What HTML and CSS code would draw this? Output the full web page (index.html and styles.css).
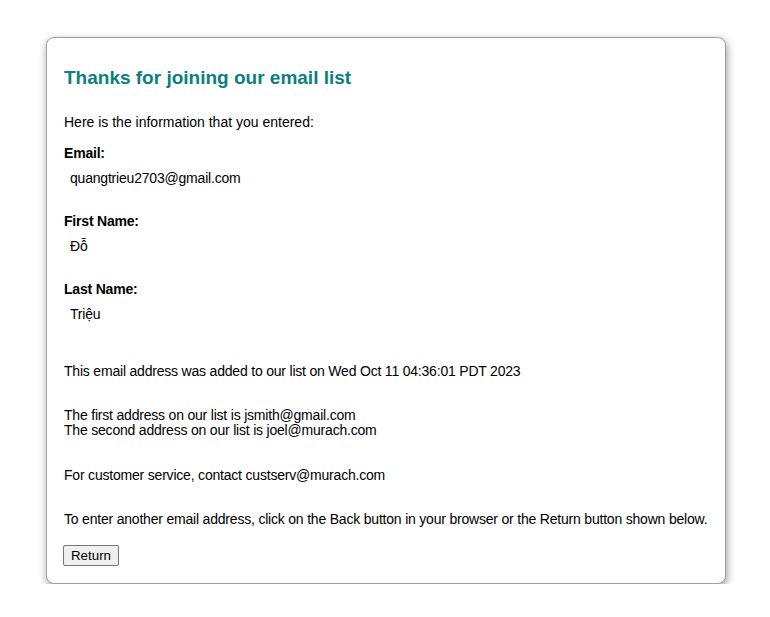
FILE: index.html
```html
<!DOCTYPE html>
<html lang="en">
<head>
<meta charset="utf-8">
<title>Murach's Java Servlets and JSP</title>
<link rel="stylesheet" href="styles.css">
</head>
<body>
<main class="card">
  <h1 class="title">Thanks for joining our email list</h1>
  <p class="intro">Here is the information that you entered:</p>

  <div class="field">
    <div class="label">Email:</div>
    <div class="value">quangtrieu2703@gmail.com</div>
  </div>
  <div class="field">
    <div class="label">First Name:</div>
    <div class="value">Đỗ</div>
  </div>
  <div class="field">
    <div class="label">Last Name:</div>
    <div class="value">Triệu</div>
  </div>

  <p class="added">This email address was added to our list on Wed Oct 11 04:36:01 PDT 2023</p>
  <p class="para para-list">The first address on our list is jsmith@gmail.com<br>The second address on our list is joel@murach.com</p>
  <p class="para">For customer service, contact custserv@murach.com</p>
  <p class="para para-last">To enter another email address, click on the Back button in your browser or the Return button shown below.</p>

  <form class="form" action="#" method="get">
    <input type="hidden" name="action" value="join">
    <button type="submit" class="btn">Return</button>
  </form>
</main>
</body>
</html>
```

FILE: styles.css
```css
html, body {
  margin: 0;
  padding: 0;
  background: #ffffff;
}

body {
  font-family: "Liberation Sans", Arial, sans-serif;
  font-size: 14px;
  line-height: 16px;
  letter-spacing: -0.2px;
  color: #000;
  padding: 37px 0 0 46px;
}

.card {
  width: 646px;
  border: 1px solid #a0a0a0;
  border-radius: 8px;
  box-shadow: 1px 3px 9px rgba(0, 0, 0, 0.4);
  padding: 29px 16px 17px 16px;
  background: #fff;
}

.title {
  margin: 0 0 26px 1px;
  font-size: 19px;
  line-height: 21px;
  letter-spacing: 0;
  font-weight: bold;
  color: #0a7f80;
}

.intro {
  margin: 0 0 15px 1px;
  letter-spacing: 0;
}

.field {
  margin: 0 0 27px 0;
}

.label {
  font-weight: bold;
  margin: 0 0 9px 1px;
}

.value {
  padding-left: 7px;
}

.field:last-of-type {
  margin-bottom: 41px;
}

.added {
  margin: 0 0 29px 1px;
}

.para {
  margin: 0 0 28px 1px;
}

.para-list {
  line-height: 15px;
  margin-bottom: 29px;
}

.para-last {
  margin-bottom: 18px;
  white-space: nowrap;
}

.form {
  margin: 0;
}

.btn {
  font-family: "Liberation Sans", Arial, sans-serif;
  font-size: 13.333px;
  line-height: 15px;
  height: 21px;
  width: 56px;
  padding: 1px 6px;
  color: #000;
  background: #efefef;
  border: 1px solid #767676;
  border-radius: 2px;
  letter-spacing: 0;
}
```
